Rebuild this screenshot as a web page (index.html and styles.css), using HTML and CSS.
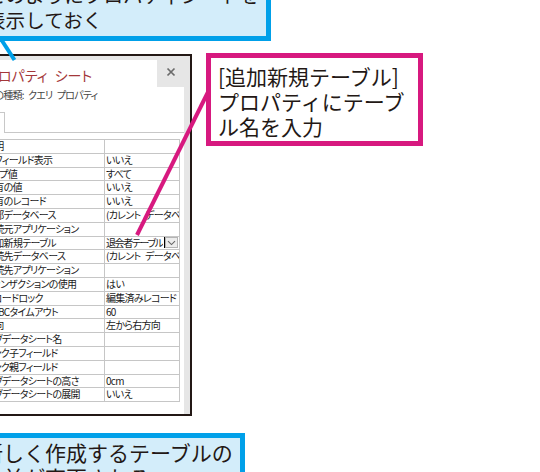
FILE: index.html
```html
<!DOCTYPE html>
<html lang="ja">
<head>
<meta charset="utf-8">
<title>プロパティシート</title>
<link rel="stylesheet" href="styles.css">
</head>
<body>
<div class="pane">
  <div class="panel">
    <div class="head">
      <div class="titles">
        <div class="title">プロパティ シート</div>
        <div class="subtitle">選択の種類: クエリ プロパティ</div>
      </div>
      <div class="close">
        <svg width="10" height="10" viewBox="0 0 10 10"><path d="M1.5 1.5 L8.5 8.5 M8.5 1.5 L1.5 8.5" stroke="#6b6b6b" stroke-width="1.7" fill="none"/></svg>
      </div>
    </div>
    <div class="tabs"><div class="tab"></div><div class="tabline"></div></div>
    <div class="grid">
      <div class="row"><div class="k">説明</div><div class="v"></div></div>
      <div class="row"><div class="k">全フィールド表示</div><div class="v">いいえ</div></div>
      <div class="row"><div class="k">トップ値</div><div class="v">すべて</div></div>
      <div class="row"><div class="k">固有の値</div><div class="v">いいえ</div></div>
      <div class="row"><div class="k">固有のレコード</div><div class="v">いいえ</div></div>
      <div class="row"><div class="k">外部データベース</div><div class="v">(カレント データベース)</div></div>
      <div class="row"><div class="k">接続元アプリケーション</div><div class="v"></div></div>
      <div class="row"><div class="k">追加新規テーブル</div><div class="v edit"><span class="txt">退会者テーブル</span><span class="caret"></span><span class="drop"><svg width="9" height="6" viewBox="0 0 9 6"><path d="M1 1.2 L4.5 4.6 L8 1.2" stroke="#666" stroke-width="1.1" fill="none"/></svg></span></div></div>
      <div class="row"><div class="k">接続先データベース</div><div class="v">(カレント データベース)</div></div>
      <div class="row"><div class="k">接続先アプリケーション</div><div class="v"></div></div>
      <div class="row"><div class="k">トランザクションの使用</div><div class="v">はい</div></div>
      <div class="row"><div class="k">レコードロック</div><div class="v">編集済みレコード</div></div>
      <div class="row"><div class="k">ODBCタイムアウト</div><div class="v">60</div></div>
      <div class="row"><div class="k">方向</div><div class="v">左から右方向</div></div>
      <div class="row"><div class="k">サブデータシート名</div><div class="v"></div></div>
      <div class="row"><div class="k">リンク子フィールド</div><div class="v"></div></div>
      <div class="row"><div class="k">リンク親フィールド</div><div class="v"></div></div>
      <div class="row"><div class="k">サブデータシートの高さ</div><div class="v">0cm</div></div>
      <div class="row"><div class="k">サブデータシートの展開</div><div class="v">いいえ</div></div>
    </div>
  </div>
</div>

<svg class="leaders" width="540" height="472" viewBox="0 0 540 472">
  <line x1="-3" y1="33" x2="14.5" y2="60" stroke="#00a0e9" stroke-width="4"/>
  <line x1="212" y1="84" x2="137" y2="235" stroke="#d7197f" stroke-width="4"/>
</svg>

<div class="callout callout-top">このようにプロパティシートを<br>表示しておく</div>
<div class="callout callout-mid">[追加新規テーブル]<br>プロパティにテーブ<br>ル名を入力</div>
<div class="callout callout-bottom">新しく作成するテーブルの<br>名前が変更される</div>
</body>
</html>
```

FILE: styles.css
```css
html, body {
  margin: 0;
  padding: 0;
  width: 540px;
  height: 472px;
  overflow: hidden;
  background: #ffffff;
}
body {
  position: relative;
  font-family: "Noto Sans CJK JP", "Noto Sans", sans-serif;
  color: #231815;
}

/* property sheet window */
.pane {
  margin: 54px 0 0 -30px;
  width: 222px;
  height: 362px;
  box-sizing: border-box;
  border: 2px solid #231815;
  background: #e6e6e6;
  display: flex;
  flex-direction: column;
  font-feature-settings: "palt";
}
.panel {
  flex: 1;
  margin: 4px 6px 0 0;
  background: #ffffff;
  display: flex;
  flex-direction: column;
}
.head {
  display: flex;
  align-items: flex-start;
}
.titles {
  flex: 1;
  padding: 5px 0 0 4px;
}
.title {
  margin-left: 9px;
  font-size: 14px;
  line-height: 20px;
  color: #a4373a;
  white-space: nowrap;
  word-spacing: 4px;
}
.subtitle {
  margin-top: 3px;
  font-size: 10px;
  line-height: 14px;
  color: #444444;
  white-space: nowrap;
  letter-spacing: -0.8px;
  word-spacing: 3px;
}
.close {
  width: 27px;
  height: 31px;
  margin-top: -4px;
  background: #e6e6e6;
  display: flex;
  align-items: center;
  justify-content: center;
}
.tabs {
  display: flex;
  height: 21px;
  margin-top: 10px;
}
.tab {
  width: 30px;
  margin-left: 3px;
  box-sizing: border-box;
  border: 1px solid #c8c8c8;
  border-bottom: none;
}
.tabline {
  flex: 1;
  border-bottom: 1px solid #c8c8c8;
}

/* property grid */
.grid {
  margin: 6px 4px 0 11px;
  display: flex;
  flex-direction: column;
  border-bottom: 1px solid #c6c6c6;
  font-size: 10px;
  letter-spacing: -0.7px;
  word-spacing: 3px;
  color: #1a1a1a;
}
.row {
  display: flex;
  height: 13.8px;
  box-sizing: border-box;
  border-top: 1px solid #c6c6c6;
}
.k {
  width: 122px;
  box-sizing: border-box;
  padding-left: 2px;
  border-right: 1px solid #c6c6c6;
  line-height: 12.8px;
  white-space: nowrap;
  overflow: hidden;
}
.v {
  flex: 1;
  min-width: 0;
  padding-left: 1px;
  border-right: 1px solid #c6c6c6;
  line-height: 12.8px;
  white-space: nowrap;
  overflow: hidden;
}
.edit {
  display: flex;
  align-items: center;
}
.txt {
  flex: 0 1 auto;
  min-width: 0;
  overflow: hidden;
  letter-spacing: -1.4px;
}
.caret {
  flex: none;
  width: 1px;
  height: 11px;
  background: #000;
  margin-left: 1px;
}
.drop {
  flex: none;
  margin-left: auto;
  margin-right: 1px;
  width: 13px;
  height: 11px;
  box-sizing: border-box;
  border: 1px solid #b4b4b4;
  background: #ececec;
  display: flex;
  align-items: center;
  justify-content: center;
}

/* annotations */
.leaders {
  position: absolute;
  left: 0;
  top: 0;
}
.callout {
  position: absolute;
  box-sizing: border-box;
  font-size: 21px;
  line-height: 25px;
  color: #231815;
  white-space: nowrap;
}
.callout-top {
  left: -30px;
  top: -26px;
  width: 301px;
  height: 67px;
  border: 5px solid #00a0e9;
  background: #d3edfa;
  padding: 2.5px 0 0 11px;
  font-size: 19.6px;
}
.callout-mid {
  left: 206px;
  top: 53px;
  width: 217px;
  height: 93px;
  border: 5px solid #d7197f;
  background: #ffffff;
  padding: 5.5px 0 0 7px;
}
.callout-bottom {
  left: -30px;
  top: 433px;
  width: 275px;
  height: 80px;
  border: 5px solid #00a0e9;
  background: #d3edfa;
  padding: 1.5px 0 0 7px;
}
```
